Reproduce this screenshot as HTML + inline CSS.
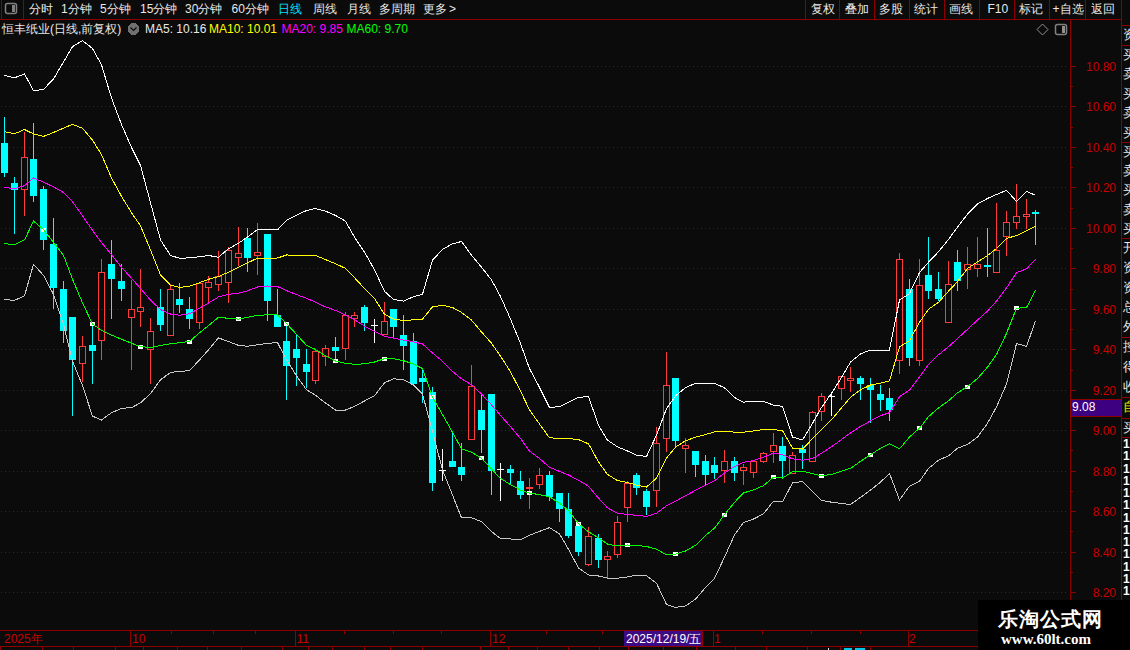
<!DOCTYPE html>
<html><head><meta charset="utf-8">
<style>
*{margin:0;padding:0;box-sizing:border-box}
html,body{width:1130px;height:650px;overflow:hidden;background:#0b0b0b;font-family:"Liberation Sans",sans-serif;}
.a{position:absolute;white-space:nowrap;line-height:16px;font-size:12px;color:#e8e8e8}
.pl{position:absolute;right:14px;width:50px;text-align:right;font-size:12px;line-height:16px;color:#c80000}
svg{position:absolute;left:0;top:0}
.wm1{position:absolute;left:998px;top:607px;font-size:20px;line-height:24px;font-weight:bold;color:#fff;font-family:"Liberation Serif",serif;letter-spacing:1px}
.wm2{position:absolute;left:1001px;top:630px;font-size:15px;line-height:18px;font-weight:bold;color:#fff;font-family:"Liberation Serif",serif}
.rpc{position:absolute;left:1123px;font-size:13px;line-height:16px;color:#e8e8e8}
.rpn{position:absolute;left:1123px;font-size:12px;line-height:12px;color:#ffffff;font-weight:bold}
</style></head><body>
<svg width="1130" height="650" shape-rendering="crispEdges">
<rect x="0" y="19" width="1121" height="1" fill="#8c0000"/>
<line x1="1" y1="66.5" x2="1068" y2="66.5" stroke="#8c0000" stroke-width="1" stroke-dasharray="1 3"/>
<line x1="1" y1="106.5" x2="1068" y2="106.5" stroke="#8c0000" stroke-width="1" stroke-dasharray="1 3"/>
<line x1="1" y1="147.5" x2="1068" y2="147.5" stroke="#8c0000" stroke-width="1" stroke-dasharray="1 3"/>
<line x1="1" y1="187.5" x2="1068" y2="187.5" stroke="#8c0000" stroke-width="1" stroke-dasharray="1 3"/>
<line x1="1" y1="228.5" x2="1068" y2="228.5" stroke="#8c0000" stroke-width="1" stroke-dasharray="1 3"/>
<line x1="1" y1="268.5" x2="1068" y2="268.5" stroke="#8c0000" stroke-width="1" stroke-dasharray="1 3"/>
<line x1="1" y1="309.5" x2="1068" y2="309.5" stroke="#8c0000" stroke-width="1" stroke-dasharray="1 3"/>
<line x1="1" y1="349.5" x2="1068" y2="349.5" stroke="#8c0000" stroke-width="1" stroke-dasharray="1 3"/>
<line x1="1" y1="390.5" x2="1068" y2="390.5" stroke="#8c0000" stroke-width="1" stroke-dasharray="1 3"/>
<line x1="1" y1="430.5" x2="1068" y2="430.5" stroke="#8c0000" stroke-width="1" stroke-dasharray="1 3"/>
<line x1="1" y1="471.5" x2="1068" y2="471.5" stroke="#8c0000" stroke-width="1" stroke-dasharray="1 3"/>
<line x1="1" y1="511.5" x2="1068" y2="511.5" stroke="#8c0000" stroke-width="1" stroke-dasharray="1 3"/>
<line x1="1" y1="552.5" x2="1068" y2="552.5" stroke="#8c0000" stroke-width="1" stroke-dasharray="1 3"/>
<line x1="1" y1="592.5" x2="1068" y2="592.5" stroke="#8c0000" stroke-width="1" stroke-dasharray="1 3"/>
<rect x="4" y="117" width="1" height="60" fill="#00ffff"/>
<rect x="1" y="143" width="7" height="30" fill="#00ffff"/>
<rect x="14" y="177" width="1" height="57" fill="#00ffff"/>
<rect x="11" y="183" width="7" height="7" fill="#00ffff"/>
<rect x="24" y="132" width="1" height="25" fill="#ff3c3c"/>
<rect x="24" y="189" width="1" height="27" fill="#ff3c3c"/>
<rect x="21.5" y="157.5" width="6" height="32" fill="none" stroke="#ff3c3c" stroke-width="1"/>
<rect x="33" y="123" width="1" height="79" fill="#00ffff"/>
<rect x="30" y="159" width="7" height="37" fill="#00ffff"/>
<rect x="43" y="186" width="1" height="64" fill="#00ffff"/>
<rect x="40" y="189" width="7" height="51" fill="#00ffff"/>
<rect x="53" y="218" width="1" height="91" fill="#00ffff"/>
<rect x="50" y="244" width="7" height="44" fill="#00ffff"/>
<rect x="63" y="281" width="1" height="62" fill="#00ffff"/>
<rect x="60" y="289" width="7" height="42" fill="#00ffff"/>
<rect x="72" y="317" width="1" height="99" fill="#00ffff"/>
<rect x="69" y="317" width="7" height="43" fill="#00ffff"/>
<rect x="82" y="336" width="1" height="10" fill="#ff3c3c"/>
<rect x="82" y="363" width="1" height="19" fill="#ff3c3c"/>
<rect x="79.5" y="346.5" width="6" height="17" fill="none" stroke="#ff3c3c" stroke-width="1"/>
<rect x="92" y="324" width="1" height="60" fill="#00ffff"/>
<rect x="89" y="345" width="7" height="6" fill="#00ffff"/>
<rect x="101" y="259" width="1" height="13" fill="#ff3c3c"/>
<rect x="101" y="340" width="1" height="20" fill="#ff3c3c"/>
<rect x="98.5" y="272.5" width="6" height="68" fill="none" stroke="#ff3c3c" stroke-width="1"/>
<rect x="111" y="240" width="1" height="79" fill="#00ffff"/>
<rect x="108" y="264" width="7" height="15" fill="#00ffff"/>
<rect x="121" y="264" width="1" height="37" fill="#00ffff"/>
<rect x="118" y="281" width="7" height="8" fill="#00ffff"/>
<rect x="131" y="280" width="1" height="29" fill="#ff3c3c"/>
<rect x="131" y="317" width="1" height="53" fill="#ff3c3c"/>
<rect x="128.5" y="309.5" width="6" height="8" fill="none" stroke="#ff3c3c" stroke-width="1"/>
<rect x="140" y="269" width="1" height="38" fill="#ff3c3c"/>
<rect x="140" y="311" width="1" height="16" fill="#ff3c3c"/>
<rect x="137.5" y="307.5" width="6" height="4" fill="none" stroke="#ff3c3c" stroke-width="1"/>
<rect x="150" y="318" width="1" height="13" fill="#ff3c3c"/>
<rect x="150" y="349" width="1" height="35" fill="#ff3c3c"/>
<rect x="147.5" y="331.5" width="6" height="18" fill="none" stroke="#ff3c3c" stroke-width="1"/>
<rect x="160" y="289" width="1" height="42" fill="#00ffff"/>
<rect x="157" y="307" width="7" height="18" fill="#00ffff"/>
<rect x="170" y="284" width="1" height="5" fill="#ff3c3c"/>
<rect x="170" y="335" width="1" height="1" fill="#ff3c3c"/>
<rect x="167.5" y="289.5" width="6" height="46" fill="none" stroke="#ff3c3c" stroke-width="1"/>
<rect x="179" y="283" width="1" height="30" fill="#00ffff"/>
<rect x="176" y="299" width="7" height="6" fill="#00ffff"/>
<rect x="189" y="297" width="1" height="32" fill="#00ffff"/>
<rect x="186" y="309" width="7" height="10" fill="#00ffff"/>
<rect x="199" y="283" width="1" height="0" fill="#ff3c3c"/>
<rect x="199" y="322" width="1" height="7" fill="#ff3c3c"/>
<rect x="196.5" y="283.5" width="6" height="39" fill="none" stroke="#ff3c3c" stroke-width="1"/>
<rect x="208" y="276" width="1" height="6" fill="#ff3c3c"/>
<rect x="208" y="287" width="1" height="16" fill="#ff3c3c"/>
<rect x="205.5" y="282.5" width="6" height="5" fill="none" stroke="#ff3c3c" stroke-width="1"/>
<rect x="218" y="251" width="1" height="25" fill="#ff3c3c"/>
<rect x="218" y="284" width="1" height="7" fill="#ff3c3c"/>
<rect x="215.5" y="276.5" width="6" height="8" fill="none" stroke="#ff3c3c" stroke-width="1"/>
<rect x="228" y="247" width="1" height="3" fill="#ff3c3c"/>
<rect x="228" y="282" width="1" height="21" fill="#ff3c3c"/>
<rect x="225.5" y="250.5" width="6" height="32" fill="none" stroke="#ff3c3c" stroke-width="1"/>
<rect x="238" y="227" width="1" height="26" fill="#ff3c3c"/>
<rect x="238" y="257" width="1" height="9" fill="#ff3c3c"/>
<rect x="235.5" y="253.5" width="6" height="4" fill="none" stroke="#ff3c3c" stroke-width="1"/>
<rect x="247" y="228" width="1" height="44" fill="#00ffff"/>
<rect x="244" y="238" width="7" height="20" fill="#00ffff"/>
<rect x="257" y="223" width="1" height="29" fill="#ff3c3c"/>
<rect x="257" y="255" width="1" height="20" fill="#ff3c3c"/>
<rect x="254.5" y="252.5" width="6" height="3" fill="none" stroke="#ff3c3c" stroke-width="1"/>
<rect x="267" y="234" width="1" height="87" fill="#00ffff"/>
<rect x="264" y="234" width="7" height="67" fill="#00ffff"/>
<rect x="277" y="289" width="1" height="38" fill="#00ffff"/>
<rect x="274" y="315" width="7" height="12" fill="#00ffff"/>
<rect x="286" y="323" width="1" height="77" fill="#00ffff"/>
<rect x="283" y="341" width="7" height="25" fill="#00ffff"/>
<rect x="296" y="335" width="1" height="51" fill="#00ffff"/>
<rect x="293" y="349" width="7" height="9" fill="#00ffff"/>
<rect x="306" y="349" width="1" height="39" fill="#00ffff"/>
<rect x="303" y="364" width="7" height="8" fill="#00ffff"/>
<rect x="315" y="349" width="1" height="2" fill="#ff3c3c"/>
<rect x="315" y="380" width="1" height="4" fill="#ff3c3c"/>
<rect x="312.5" y="351.5" width="6" height="29" fill="none" stroke="#ff3c3c" stroke-width="1"/>
<rect x="325" y="345" width="1" height="3" fill="#ff3c3c"/>
<rect x="325" y="356" width="1" height="10" fill="#ff3c3c"/>
<rect x="322.5" y="348.5" width="6" height="8" fill="none" stroke="#ff3c3c" stroke-width="1"/>
<rect x="335" y="337" width="1" height="23" fill="#00ffff"/>
<rect x="332" y="347" width="7" height="4" fill="#00ffff"/>
<rect x="345" y="312" width="1" height="3" fill="#ff3c3c"/>
<rect x="345" y="348" width="1" height="12" fill="#ff3c3c"/>
<rect x="342.5" y="315.5" width="6" height="33" fill="none" stroke="#ff3c3c" stroke-width="1"/>
<rect x="354" y="312" width="1" height="3" fill="#ff3c3c"/>
<rect x="354" y="318" width="1" height="9" fill="#ff3c3c"/>
<rect x="351.5" y="315.5" width="6" height="3" fill="none" stroke="#ff3c3c" stroke-width="1"/>
<rect x="364" y="305" width="1" height="26" fill="#00ffff"/>
<rect x="361" y="307" width="7" height="16" fill="#00ffff"/>
<rect x="374" y="319" width="1" height="24" fill="#ffffff"/>
<rect x="371" y="325" width="7" height="1" fill="#ffffff"/>
<rect x="384" y="302" width="1" height="19" fill="#ff3c3c"/>
<rect x="384" y="334" width="1" height="1" fill="#ff3c3c"/>
<rect x="381.5" y="321.5" width="6" height="13" fill="none" stroke="#ff3c3c" stroke-width="1"/>
<rect x="393" y="309" width="1" height="28" fill="#00ffff"/>
<rect x="390" y="309" width="7" height="18" fill="#00ffff"/>
<rect x="403" y="315" width="1" height="55" fill="#00ffff"/>
<rect x="400" y="335" width="7" height="11" fill="#00ffff"/>
<rect x="413" y="333" width="1" height="53" fill="#00ffff"/>
<rect x="410" y="341" width="7" height="43" fill="#00ffff"/>
<rect x="422" y="369" width="1" height="34" fill="#00ffff"/>
<rect x="419" y="378" width="7" height="4" fill="#00ffff"/>
<rect x="432" y="387" width="1" height="104" fill="#00ffff"/>
<rect x="429" y="392" width="7" height="91" fill="#00ffff"/>
<rect x="442" y="449" width="1" height="32" fill="#ffffff"/>
<rect x="439" y="470" width="7" height="1" fill="#ffffff"/>
<rect x="452" y="433" width="1" height="34" fill="#00ffff"/>
<rect x="449" y="461" width="7" height="6" fill="#00ffff"/>
<rect x="461" y="443" width="1" height="38" fill="#00ffff"/>
<rect x="458" y="467" width="7" height="8" fill="#00ffff"/>
<rect x="471" y="365" width="1" height="21" fill="#ff3c3c"/>
<rect x="471" y="439" width="1" height="1" fill="#ff3c3c"/>
<rect x="468.5" y="386.5" width="6" height="53" fill="none" stroke="#ff3c3c" stroke-width="1"/>
<rect x="481" y="395" width="1" height="58" fill="#00ffff"/>
<rect x="478" y="410" width="7" height="20" fill="#00ffff"/>
<rect x="491" y="394" width="1" height="101" fill="#00ffff"/>
<rect x="488" y="394" width="7" height="77" fill="#00ffff"/>
<rect x="500" y="463" width="1" height="38" fill="#ffffff"/>
<rect x="497" y="469" width="7" height="1" fill="#ffffff"/>
<rect x="510" y="465" width="1" height="19" fill="#00ffff"/>
<rect x="507" y="469" width="7" height="4" fill="#00ffff"/>
<rect x="520" y="471" width="1" height="28" fill="#00ffff"/>
<rect x="517" y="481" width="7" height="14" fill="#00ffff"/>
<rect x="529" y="478" width="1" height="9" fill="#ff3c3c"/>
<rect x="529" y="488" width="1" height="21" fill="#ff3c3c"/>
<rect x="526.5" y="487.5" width="6" height="1" fill="none" stroke="#ff3c3c" stroke-width="1"/>
<rect x="539" y="468" width="1" height="7" fill="#ff3c3c"/>
<rect x="539" y="484" width="1" height="5" fill="#ff3c3c"/>
<rect x="536.5" y="475.5" width="6" height="9" fill="none" stroke="#ff3c3c" stroke-width="1"/>
<rect x="549" y="471" width="1" height="30" fill="#00ffff"/>
<rect x="546" y="475" width="7" height="22" fill="#00ffff"/>
<rect x="559" y="493" width="1" height="29" fill="#00ffff"/>
<rect x="556" y="493" width="7" height="16" fill="#00ffff"/>
<rect x="568" y="493" width="1" height="45" fill="#00ffff"/>
<rect x="565" y="509" width="7" height="27" fill="#00ffff"/>
<rect x="578" y="522" width="1" height="34" fill="#00ffff"/>
<rect x="575" y="526" width="7" height="26" fill="#00ffff"/>
<rect x="588" y="527" width="1" height="9" fill="#ff3c3c"/>
<rect x="588" y="564" width="1" height="2" fill="#ff3c3c"/>
<rect x="585.5" y="536.5" width="6" height="28" fill="none" stroke="#ff3c3c" stroke-width="1"/>
<rect x="598" y="534" width="1" height="34" fill="#00ffff"/>
<rect x="595" y="538" width="7" height="22" fill="#00ffff"/>
<rect x="607" y="551" width="1" height="5" fill="#ff3c3c"/>
<rect x="607" y="559" width="1" height="19" fill="#ff3c3c"/>
<rect x="604.5" y="556.5" width="6" height="3" fill="none" stroke="#ff3c3c" stroke-width="1"/>
<rect x="617" y="516" width="1" height="6" fill="#ff3c3c"/>
<rect x="617" y="554" width="1" height="4" fill="#ff3c3c"/>
<rect x="614.5" y="522.5" width="6" height="32" fill="none" stroke="#ff3c3c" stroke-width="1"/>
<rect x="627" y="481" width="1" height="2" fill="#ff3c3c"/>
<rect x="627" y="507" width="1" height="15" fill="#ff3c3c"/>
<rect x="624.5" y="483.5" width="6" height="24" fill="none" stroke="#ff3c3c" stroke-width="1"/>
<rect x="636" y="473" width="1" height="22" fill="#00ffff"/>
<rect x="633" y="475" width="7" height="13" fill="#00ffff"/>
<rect x="646" y="489" width="1" height="26" fill="#00ffff"/>
<rect x="643" y="491" width="7" height="16" fill="#00ffff"/>
<rect x="656" y="427" width="1" height="16" fill="#ff3c3c"/>
<rect x="656" y="490" width="1" height="17" fill="#ff3c3c"/>
<rect x="653.5" y="443.5" width="6" height="47" fill="none" stroke="#ff3c3c" stroke-width="1"/>
<rect x="666" y="352" width="1" height="33" fill="#ff3c3c"/>
<rect x="666" y="438" width="1" height="14" fill="#ff3c3c"/>
<rect x="663.5" y="385.5" width="6" height="53" fill="none" stroke="#ff3c3c" stroke-width="1"/>
<rect x="675" y="378" width="1" height="69" fill="#00ffff"/>
<rect x="672" y="378" width="7" height="63" fill="#00ffff"/>
<rect x="685" y="438" width="1" height="7" fill="#ff3c3c"/>
<rect x="685" y="448" width="1" height="25" fill="#ff3c3c"/>
<rect x="682.5" y="445.5" width="6" height="3" fill="none" stroke="#ff3c3c" stroke-width="1"/>
<rect x="695" y="451" width="1" height="26" fill="#00ffff"/>
<rect x="692" y="451" width="7" height="14" fill="#00ffff"/>
<rect x="705" y="455" width="1" height="31" fill="#00ffff"/>
<rect x="702" y="461" width="7" height="14" fill="#00ffff"/>
<rect x="714" y="457" width="1" height="22" fill="#00ffff"/>
<rect x="711" y="465" width="7" height="8" fill="#00ffff"/>
<rect x="724" y="450" width="1" height="11" fill="#ff3c3c"/>
<rect x="724" y="470" width="1" height="13" fill="#ff3c3c"/>
<rect x="721.5" y="461.5" width="6" height="9" fill="none" stroke="#ff3c3c" stroke-width="1"/>
<rect x="734" y="457" width="1" height="24" fill="#00ffff"/>
<rect x="731" y="461" width="7" height="12" fill="#00ffff"/>
<rect x="743" y="464" width="1" height="3" fill="#ff3c3c"/>
<rect x="743" y="470" width="1" height="15" fill="#ff3c3c"/>
<rect x="740.5" y="467.5" width="6" height="3" fill="none" stroke="#ff3c3c" stroke-width="1"/>
<rect x="753" y="461" width="1" height="0" fill="#ff3c3c"/>
<rect x="753" y="472" width="1" height="6" fill="#ff3c3c"/>
<rect x="750.5" y="461.5" width="6" height="11" fill="none" stroke="#ff3c3c" stroke-width="1"/>
<rect x="763" y="452" width="1" height="1" fill="#ff3c3c"/>
<rect x="763" y="461" width="1" height="2" fill="#ff3c3c"/>
<rect x="760.5" y="453.5" width="6" height="8" fill="none" stroke="#ff3c3c" stroke-width="1"/>
<rect x="773" y="433" width="1" height="12" fill="#ff3c3c"/>
<rect x="773" y="451" width="1" height="12" fill="#ff3c3c"/>
<rect x="770.5" y="445.5" width="6" height="6" fill="none" stroke="#ff3c3c" stroke-width="1"/>
<rect x="782" y="437" width="1" height="40" fill="#00ffff"/>
<rect x="779" y="446" width="7" height="15" fill="#00ffff"/>
<rect x="792" y="452" width="1" height="3" fill="#ff3c3c"/>
<rect x="792" y="473" width="1" height="1" fill="#ff3c3c"/>
<rect x="789.5" y="455.5" width="6" height="18" fill="none" stroke="#ff3c3c" stroke-width="1"/>
<rect x="802" y="445" width="1" height="24" fill="#00ffff"/>
<rect x="799" y="449" width="7" height="4" fill="#00ffff"/>
<rect x="812" y="411" width="1" height="1" fill="#ff3c3c"/>
<rect x="812" y="461" width="1" height="1" fill="#ff3c3c"/>
<rect x="809.5" y="412.5" width="6" height="49" fill="none" stroke="#ff3c3c" stroke-width="1"/>
<rect x="821" y="393" width="1" height="3" fill="#ff3c3c"/>
<rect x="821" y="411" width="1" height="10" fill="#ff3c3c"/>
<rect x="818.5" y="396.5" width="6" height="15" fill="none" stroke="#ff3c3c" stroke-width="1"/>
<rect x="831" y="394" width="1" height="22" fill="#ffffff"/>
<rect x="828" y="396" width="7" height="1" fill="#ffffff"/>
<rect x="841" y="376" width="1" height="0" fill="#ff3c3c"/>
<rect x="841" y="388" width="1" height="12" fill="#ff3c3c"/>
<rect x="838.5" y="376.5" width="6" height="12" fill="none" stroke="#ff3c3c" stroke-width="1"/>
<rect x="850" y="367" width="1" height="11" fill="#ff3c3c"/>
<rect x="850" y="380" width="1" height="12" fill="#ff3c3c"/>
<rect x="847.5" y="378.5" width="6" height="2" fill="none" stroke="#ff3c3c" stroke-width="1"/>
<rect x="860" y="376" width="1" height="24" fill="#00ffff"/>
<rect x="857" y="378" width="7" height="6" fill="#00ffff"/>
<rect x="870" y="378" width="1" height="45" fill="#00ffff"/>
<rect x="867" y="385" width="7" height="5" fill="#00ffff"/>
<rect x="880" y="385" width="1" height="26" fill="#00ffff"/>
<rect x="877" y="394" width="7" height="6" fill="#00ffff"/>
<rect x="889" y="388" width="1" height="33" fill="#00ffff"/>
<rect x="886" y="398" width="7" height="12" fill="#00ffff"/>
<rect x="899" y="253" width="1" height="6" fill="#ff3c3c"/>
<rect x="899" y="360" width="1" height="14" fill="#ff3c3c"/>
<rect x="896.5" y="259.5" width="6" height="101" fill="none" stroke="#ff3c3c" stroke-width="1"/>
<rect x="909" y="279" width="1" height="87" fill="#00ffff"/>
<rect x="906" y="289" width="7" height="69" fill="#00ffff"/>
<rect x="919" y="259" width="1" height="26" fill="#ff3c3c"/>
<rect x="919" y="360" width="1" height="6" fill="#ff3c3c"/>
<rect x="916.5" y="285.5" width="6" height="75" fill="none" stroke="#ff3c3c" stroke-width="1"/>
<rect x="928" y="237" width="1" height="62" fill="#00ffff"/>
<rect x="925" y="275" width="7" height="16" fill="#00ffff"/>
<rect x="938" y="272" width="1" height="29" fill="#00ffff"/>
<rect x="935" y="289" width="7" height="10" fill="#00ffff"/>
<rect x="948" y="261" width="1" height="23" fill="#ff3c3c"/>
<rect x="948" y="322" width="1" height="1" fill="#ff3c3c"/>
<rect x="945.5" y="284.5" width="6" height="38" fill="none" stroke="#ff3c3c" stroke-width="1"/>
<rect x="957" y="250" width="1" height="41" fill="#00ffff"/>
<rect x="954" y="262" width="7" height="19" fill="#00ffff"/>
<rect x="967" y="247" width="1" height="17" fill="#ff3c3c"/>
<rect x="967" y="269" width="1" height="20" fill="#ff3c3c"/>
<rect x="964.5" y="264.5" width="6" height="5" fill="none" stroke="#ff3c3c" stroke-width="1"/>
<rect x="977" y="237" width="1" height="27" fill="#ff3c3c"/>
<rect x="977" y="268" width="1" height="9" fill="#ff3c3c"/>
<rect x="974.5" y="264.5" width="6" height="4" fill="none" stroke="#ff3c3c" stroke-width="1"/>
<rect x="987" y="228" width="1" height="49" fill="#00ffff"/>
<rect x="984" y="265" width="7" height="2" fill="#00ffff"/>
<rect x="996" y="203" width="1" height="47" fill="#ff3c3c"/>
<rect x="996" y="272" width="1" height="1" fill="#ff3c3c"/>
<rect x="993.5" y="250.5" width="6" height="22" fill="none" stroke="#ff3c3c" stroke-width="1"/>
<rect x="1006" y="211" width="1" height="11" fill="#ff3c3c"/>
<rect x="1006" y="236" width="1" height="20" fill="#ff3c3c"/>
<rect x="1003.5" y="222.5" width="6" height="14" fill="none" stroke="#ff3c3c" stroke-width="1"/>
<rect x="1016" y="184" width="1" height="32" fill="#ff3c3c"/>
<rect x="1016" y="222" width="1" height="7" fill="#ff3c3c"/>
<rect x="1013.5" y="216.5" width="6" height="6" fill="none" stroke="#ff3c3c" stroke-width="1"/>
<rect x="1026" y="199" width="1" height="15" fill="#ff3c3c"/>
<rect x="1026" y="216" width="1" height="13" fill="#ff3c3c"/>
<rect x="1023.5" y="214.5" width="6" height="2" fill="none" stroke="#ff3c3c" stroke-width="1"/>
<rect x="1035" y="210" width="1" height="35" fill="#00ffff"/>
<rect x="1032" y="212" width="7" height="2" fill="#00ffff"/>
<rect x="41" y="228" width="5" height="4" fill="#ffffff"/>
<rect x="90" y="322" width="5" height="4" fill="#ffffff"/>
<rect x="138" y="345" width="5" height="4" fill="#ffffff"/>
<rect x="187" y="340" width="5" height="4" fill="#ffffff"/>
<rect x="236" y="317" width="5" height="4" fill="#ffffff"/>
<rect x="284" y="322" width="5" height="4" fill="#ffffff"/>
<rect x="333" y="359" width="5" height="4" fill="#ffffff"/>
<rect x="382" y="357" width="5" height="4" fill="#ffffff"/>
<rect x="430" y="395" width="5" height="4" fill="#ffffff"/>
<rect x="479" y="456" width="5" height="4" fill="#ffffff"/>
<rect x="527" y="491" width="5" height="4" fill="#ffffff"/>
<rect x="576" y="522" width="5" height="4" fill="#ffffff"/>
<rect x="625" y="543" width="5" height="4" fill="#ffffff"/>
<rect x="673" y="552" width="5" height="4" fill="#ffffff"/>
<rect x="722" y="513" width="5" height="4" fill="#ffffff"/>
<rect x="771" y="475" width="5" height="4" fill="#ffffff"/>
<rect x="819" y="474" width="5" height="4" fill="#ffffff"/>
<rect x="868" y="453" width="5" height="4" fill="#ffffff"/>
<rect x="917" y="426" width="5" height="4" fill="#ffffff"/>
<rect x="965" y="385" width="5" height="4" fill="#ffffff"/>
<rect x="1014" y="306" width="5" height="4" fill="#ffffff"/>
<polyline points="4.5,75.3 14.5,77.8 24.5,73.9 33.5,90.7 43.5,89.4 53.5,79.0 63.5,62.0 72.5,46.7 82.5,40.6 92.5,48.5 101.5,64.8 111.5,98.0 121.5,124.5 131.5,147.4 140.5,165.5 150.5,202.7 160.5,239.9 170.5,255.5 179.5,258.2 189.5,257.9 199.5,256.7 208.5,255.5 218.5,257.2 228.5,248.8 238.5,243.2 247.5,237.0 257.5,229.6 267.5,229.2 277.5,229.9 286.5,220.2 296.5,215.2 306.5,210.5 315.5,208.5 325.5,211.2 335.5,215.4 345.5,221.2 354.5,237.1 364.5,252.1 374.5,269.8 384.5,291.3 393.5,299.5 403.5,301.1 413.5,296.7 422.5,294.3 432.5,260.2 442.5,249.4 452.5,243.8 461.5,241.5 471.5,255.1 481.5,267.2 491.5,279.9 500.5,296.5 510.5,319.0 520.5,343.5 529.5,368.6 539.5,387.4 549.5,407.4 559.5,406.7 568.5,402.2 578.5,397.4 588.5,396.6 598.5,425.2 607.5,440.2 617.5,446.9 627.5,451.0 636.5,455.2 646.5,456.5 656.5,435.1 666.5,408.5 675.5,396.0 685.5,387.5 695.5,383.4 705.5,383.4 714.5,383.4 724.5,387.8 734.5,397.5 743.5,402.2 753.5,401.1 763.5,401.3 773.5,405.2 782.5,406.3 792.5,437.0 802.5,439.9 812.5,423.3 821.5,407.5 831.5,393.4 841.5,377.5 850.5,362.1 860.5,353.9 870.5,350.0 880.5,350.0 889.5,350.0 899.5,300.1 909.5,293.5 919.5,272.5 928.5,262.2 938.5,251.7 948.5,239.4 957.5,227.2 967.5,214.1 977.5,204.0 987.5,198.5 996.5,194.5 1006.5,190.3 1016.5,201.4 1026.5,191.2 1035.5,195.4" fill="none" stroke="#ffffff" stroke-width="1"/>
<polyline points="4.5,131.6 14.5,133.8 24.5,129.5 33.5,133.9 43.5,136.4 53.5,132.5 63.5,128.1 72.5,124.3 82.5,128.3 92.5,140.1 101.5,154.6 111.5,178.0 121.5,196.3 131.5,212.7 140.5,225.8 150.5,249.8 160.5,275.0 170.5,285.2 179.5,287.5 189.5,286.1 199.5,282.7 208.5,279.3 218.5,276.5 228.5,272.2 238.5,267.3 247.5,262.8 257.5,258.2 267.5,258.7 277.5,258.0 286.5,255.0 296.5,255.1 306.5,255.3 315.5,255.4 325.5,259.6 335.5,263.7 345.5,268.4 354.5,277.7 364.5,288.5 374.5,298.4 384.5,314.4 393.5,319.0 403.5,320.5 413.5,319.8 422.5,319.2 432.5,306.8 442.5,305.3 452.5,307.5 461.5,312.4 471.5,320.1 481.5,331.9 491.5,343.2 500.5,356.1 510.5,371.8 520.5,391.1 529.5,409.9 539.5,424.0 549.5,437.8 559.5,438.4 568.5,438.6 578.5,439.6 588.5,443.8 598.5,461.9 607.5,474.4 617.5,480.6 627.5,482.5 636.5,485.1 646.5,487.0 656.5,478.2 666.5,458.1 675.5,447.2 685.5,440.8 695.5,437.2 705.5,434.6 714.5,431.8 724.5,431.2 734.5,432.1 743.5,432.2 753.5,430.9 763.5,429.5 773.5,429.6 782.5,430.6 792.5,448.0 802.5,449.1 812.5,438.7 821.5,429.8 831.5,419.7 841.5,407.9 850.5,397.3 860.5,389.9 870.5,385.0 880.5,383.1 889.5,380.8 899.5,347.0 909.5,340.6 919.5,322.3 928.5,309.3 938.5,302.3 948.5,291.2 957.5,281.6 967.5,268.5 977.5,261.9 987.5,255.6 996.5,248.5 1006.5,238.4 1016.5,235.6 1026.5,230.6 1035.5,226.2" fill="none" stroke="#ffff00" stroke-width="1"/>
<polyline points="4.5,187.4 14.5,188.8 24.5,185.7 33.5,178.0 43.5,182.1 53.5,186.9 63.5,192.5 72.5,201.8 82.5,215.8 92.5,230.3 101.5,242.6 111.5,254.6 121.5,267.3 131.5,278.3 140.5,288.4 150.5,300.1 160.5,309.6 170.5,314.0 179.5,315.2 189.5,313.8 199.5,308.2 208.5,303.0 218.5,296.9 228.5,294.3 238.5,293.1 247.5,290.8 257.5,287.0 267.5,286.0 277.5,286.6 286.5,290.6 296.5,294.6 306.5,298.2 315.5,302.3 325.5,306.9 335.5,310.4 345.5,315.0 354.5,319.7 364.5,326.1 374.5,331.3 384.5,336.3 393.5,338.0 403.5,340.2 413.5,341.8 422.5,344.0 432.5,353.0 442.5,361.3 452.5,371.5 461.5,378.8 471.5,384.9 481.5,394.0 491.5,404.8 500.5,415.4 510.5,426.6 520.5,438.5 529.5,451.1 539.5,458.4 549.5,467.3 559.5,471.4 568.5,475.0 578.5,480.2 588.5,486.3 598.5,498.1 607.5,507.9 617.5,513.2 627.5,514.5 636.5,515.4 646.5,516.4 656.5,513.3 666.5,505.7 675.5,501.3 685.5,495.7 695.5,490.4 705.5,485.3 714.5,480.8 724.5,472.9 734.5,466.7 743.5,462.3 753.5,460.5 763.5,457.3 773.5,453.1 782.5,454.7 792.5,458.8 802.5,460.2 812.5,458.5 821.5,453.2 831.5,446.7 841.5,439.6 850.5,432.9 860.5,426.4 870.5,420.9 880.5,415.7 889.5,412.7 899.5,396.7 909.5,390.0 919.5,377.0 928.5,364.5 938.5,354.8 948.5,346.7 957.5,338.6 967.5,329.3 977.5,320.1 987.5,311.0 996.5,301.1 1006.5,288.0 1016.5,272.7 1026.5,268.9 1035.5,259.5" fill="none" stroke="#ff00ff" stroke-width="1"/>
<polyline points="4.5,243.5 14.5,244.9 24.5,239.9 33.5,221.0 43.5,229.6 53.5,242.4 63.5,255.3 72.5,279.3 82.5,302.9 92.5,324.1 101.5,330.3 111.5,335.1 121.5,339.2 131.5,343.2 140.5,346.7 150.5,347.4 160.5,345.5 170.5,343.8 179.5,342.7 189.5,341.5 199.5,332.8 208.5,325.6 218.5,317.3 228.5,318.3 238.5,319.1 247.5,317.3 257.5,315.4 267.5,314.8 277.5,314.9 286.5,323.5 296.5,334.4 306.5,345.4 315.5,349.5 325.5,355.8 335.5,361.0 345.5,363.4 354.5,364.2 364.5,363.9 374.5,362.0 384.5,358.7 393.5,358.7 403.5,360.7 413.5,364.0 422.5,368.5 432.5,397.2 442.5,414.5 452.5,432.3 461.5,448.8 471.5,452.1 481.5,458.3 491.5,469.0 500.5,478.4 510.5,484.6 520.5,490.1 529.5,493.1 539.5,494.6 549.5,496.8 559.5,503.2 568.5,510.5 578.5,523.6 588.5,531.8 598.5,537.7 607.5,544.1 617.5,546.0 627.5,545.0 636.5,545.5 646.5,546.5 656.5,549.1 666.5,554.8 675.5,554.2 685.5,551.0 695.5,545.3 705.5,535.5 714.5,528.2 724.5,514.6 734.5,502.3 743.5,492.9 753.5,489.9 763.5,485.7 773.5,477.1 782.5,478.1 792.5,471.7 802.5,471.3 812.5,473.6 821.5,475.8 831.5,474.4 841.5,471.1 850.5,468.3 860.5,461.4 870.5,454.6 880.5,448.4 889.5,443.6 899.5,448.9 909.5,437.0 919.5,428.2 928.5,416.7 938.5,407.9 948.5,400.8 957.5,392.8 967.5,386.6 977.5,378.5 987.5,367.1 996.5,354.5 1006.5,333.4 1016.5,308.2 1026.5,307.6 1035.5,290.3" fill="none" stroke="#00ff00" stroke-width="1"/>
<polyline points="4.5,299.5 14.5,300.4 24.5,295.8 33.5,264.3 43.5,275.4 53.5,294.4 63.5,324.3 72.5,361.2 82.5,385.6 92.5,416.2 101.5,420.0 111.5,412.7 121.5,408.4 131.5,407.6 140.5,402.9 150.5,393.6 160.5,379.9 170.5,372.4 179.5,371.5 189.5,370.6 199.5,360.0 208.5,349.8 218.5,337.9 228.5,341.5 238.5,345.4 247.5,346.3 257.5,344.8 267.5,343.4 277.5,342.6 286.5,359.7 296.5,375.9 306.5,389.7 315.5,395.3 325.5,403.0 335.5,410.0 345.5,410.0 354.5,406.4 364.5,401.0 374.5,395.7 384.5,382.8 393.5,378.7 403.5,379.8 413.5,385.0 422.5,394.1 432.5,431.3 442.5,470.0 452.5,495.1 461.5,517.8 471.5,517.7 481.5,521.7 491.5,531.5 500.5,538.6 510.5,539.0 520.5,539.6 529.5,535.2 539.5,531.4 549.5,527.6 559.5,534.0 568.5,549.2 578.5,567.9 588.5,575.0 598.5,576.0 607.5,578.2 617.5,578.2 627.5,576.9 636.5,575.1 646.5,575.7 656.5,583.2 666.5,604.5 675.5,607.4 685.5,606.0 695.5,599.1 705.5,587.6 714.5,578.3 724.5,557.2 734.5,535.0 743.5,522.5 753.5,519.0 763.5,513.9 773.5,501.1 782.5,502.0 792.5,482.8 802.5,481.5 812.5,491.4 821.5,500.3 831.5,502.2 841.5,503.5 850.5,504.5 860.5,497.4 870.5,490.1 880.5,482.1 889.5,473.5 899.5,499.9 909.5,486.1 919.5,481.3 928.5,468.5 938.5,460.2 948.5,455.9 957.5,448.2 967.5,444.4 977.5,437.1 987.5,423.3 996.5,406.9 1006.5,384.2 1016.5,343.6 1026.5,346.3 1035.5,321.0" fill="none" stroke="#c8c8c8" stroke-width="1"/>
<rect x="1070" y="20" width="1" height="610" fill="#8c0000"/>
<rect x="1121" y="0" width="1" height="600" fill="#8c0000"/>
<rect x="1070" y="66" width="6" height="1" fill="#8c0000"/>
<rect x="1070" y="86" width="3" height="1" fill="#8c0000"/>
<rect x="1070" y="106" width="6" height="1" fill="#8c0000"/>
<rect x="1070" y="127" width="3" height="1" fill="#8c0000"/>
<rect x="1070" y="147" width="6" height="1" fill="#8c0000"/>
<rect x="1070" y="167" width="3" height="1" fill="#8c0000"/>
<rect x="1070" y="187" width="6" height="1" fill="#8c0000"/>
<rect x="1070" y="208" width="3" height="1" fill="#8c0000"/>
<rect x="1070" y="228" width="6" height="1" fill="#8c0000"/>
<rect x="1070" y="248" width="3" height="1" fill="#8c0000"/>
<rect x="1070" y="268" width="6" height="1" fill="#8c0000"/>
<rect x="1070" y="289" width="3" height="1" fill="#8c0000"/>
<rect x="1070" y="309" width="6" height="1" fill="#8c0000"/>
<rect x="1070" y="329" width="3" height="1" fill="#8c0000"/>
<rect x="1070" y="349" width="6" height="1" fill="#8c0000"/>
<rect x="1070" y="370" width="3" height="1" fill="#8c0000"/>
<rect x="1070" y="390" width="6" height="1" fill="#8c0000"/>
<rect x="1070" y="410" width="3" height="1" fill="#8c0000"/>
<rect x="1070" y="430" width="6" height="1" fill="#8c0000"/>
<rect x="1070" y="450" width="3" height="1" fill="#8c0000"/>
<rect x="1070" y="471" width="6" height="1" fill="#8c0000"/>
<rect x="1070" y="491" width="3" height="1" fill="#8c0000"/>
<rect x="1070" y="511" width="6" height="1" fill="#8c0000"/>
<rect x="1070" y="531" width="3" height="1" fill="#8c0000"/>
<rect x="1070" y="552" width="6" height="1" fill="#8c0000"/>
<rect x="1070" y="572" width="3" height="1" fill="#8c0000"/>
<rect x="1070" y="592" width="6" height="1" fill="#8c0000"/>
<rect x="1" y="0" width="1" height="19" fill="#8c0000"/>
<rect x="23" y="0" width="1" height="19" fill="#8c0000"/>
<rect x="805" y="0" width="1" height="19" fill="#8c0000"/>
<rect x="839" y="0" width="1" height="19" fill="#8c0000"/>
<rect x="874" y="0" width="1" height="19" fill="#8c0000"/>
<rect x="909" y="0" width="1" height="19" fill="#8c0000"/>
<rect x="944" y="0" width="1" height="19" fill="#8c0000"/>
<rect x="979" y="0" width="1" height="19" fill="#8c0000"/>
<rect x="1014" y="0" width="1" height="19" fill="#8c0000"/>
<rect x="1049" y="0" width="1" height="19" fill="#8c0000"/>
<rect x="1085" y="0" width="1" height="19" fill="#8c0000"/>
<rect x="5.5" y="3.5" width="11" height="10" rx="2" fill="none" stroke="#808080" stroke-width="1.5" shape-rendering="auto"/>
<rect x="12" y="5" width="3" height="7" fill="#808080"/>
<circle cx="133.5" cy="29" r="6" fill="#707070"/>
<polyline points="130.5,27.5 133.5,30.5 136.5,27.5" fill="none" stroke="#0b0b0b" stroke-width="1.2" shape-rendering="auto"/>
<polygon points="1042.5,24 1048,29.5 1042.5,35 1037,29.5" fill="none" stroke="#909090" stroke-width="1" shape-rendering="auto"/>
<rect x="1055.5" y="24.5" width="11" height="10" rx="2" fill="none" stroke="#808080" stroke-width="1.5" shape-rendering="auto"/>
<rect x="1062" y="26" width="3" height="7" fill="#909090"/>
<rect x="0" y="630" width="1121" height="1" fill="#8c0000"/>
<rect x="0" y="646" width="1121" height="1" fill="#8c0000"/>
<rect x="130" y="630" width="1" height="16" fill="#8c0000"/>
<rect x="295" y="630" width="1" height="16" fill="#8c0000"/>
<rect x="490" y="630" width="1" height="16" fill="#8c0000"/>
<rect x="702" y="630" width="1" height="16" fill="#8c0000"/>
<rect x="713" y="630" width="1" height="16" fill="#8c0000"/>
<rect x="908" y="630" width="1" height="16" fill="#8c0000"/>
<rect x="171" y="631" width="1" height="3" fill="#8c0000"/>
<rect x="213" y="631" width="1" height="3" fill="#8c0000"/>
<rect x="255" y="631" width="1" height="3" fill="#8c0000"/>
<rect x="344" y="631" width="1" height="3" fill="#8c0000"/>
<rect x="393" y="631" width="1" height="3" fill="#8c0000"/>
<rect x="441" y="631" width="1" height="3" fill="#8c0000"/>
<rect x="546" y="631" width="1" height="3" fill="#8c0000"/>
<rect x="602" y="631" width="1" height="3" fill="#8c0000"/>
<rect x="762" y="631" width="1" height="3" fill="#8c0000"/>
<rect x="811" y="631" width="1" height="3" fill="#8c0000"/>
<rect x="860" y="631" width="1" height="3" fill="#8c0000"/>
<rect x="624" y="631" width="78" height="15" fill="#3c0a82"/>
<rect x="0" y="647" width="1" height="3" fill="#8c0000"/>
<rect x="42" y="647" width="1" height="3" fill="#8c0000"/>
<rect x="73" y="647" width="1" height="3" fill="#8c0000"/>
<rect x="115" y="647" width="1" height="3" fill="#8c0000"/>
<rect x="143" y="647" width="1" height="3" fill="#8c0000"/>
<rect x="177" y="647" width="1" height="3" fill="#8c0000"/>
<rect x="207" y="647" width="1" height="3" fill="#8c0000"/>
<rect x="241" y="647" width="1" height="3" fill="#8c0000"/>
<rect x="282" y="647" width="1" height="3" fill="#8c0000"/>
<rect x="308" y="647" width="1" height="3" fill="#8c0000"/>
<rect x="332" y="647" width="1" height="3" fill="#8c0000"/>
<rect x="364" y="647" width="1" height="3" fill="#8c0000"/>
<rect x="390" y="647" width="1" height="3" fill="#8c0000"/>
<rect x="422" y="647" width="1" height="3" fill="#8c0000"/>
<rect x="480" y="647" width="1" height="3" fill="#8c0000"/>
<rect x="508" y="647" width="1" height="3" fill="#8c0000"/>
<rect x="537" y="647" width="1" height="3" fill="#8c0000"/>
<rect x="568" y="647" width="1" height="3" fill="#8c0000"/>
<rect x="599" y="647" width="1" height="3" fill="#8c0000"/>
<rect x="628" y="647" width="1" height="3" fill="#8c0000"/>
<rect x="663" y="647" width="1" height="3" fill="#8c0000"/>
<rect x="696" y="647" width="1" height="3" fill="#8c0000"/>
<rect x="735" y="647" width="1" height="3" fill="#8c0000"/>
<rect x="766" y="647" width="1" height="3" fill="#8c0000"/>
<rect x="807" y="647" width="1" height="3" fill="#8c0000"/>
<rect x="840" y="647" width="1" height="3" fill="#8c0000"/>
<rect x="870" y="647" width="1" height="3" fill="#8c0000"/>
<rect x="828" y="648" width="1" height="2" fill="#e0e0e0"/>
<rect x="844" y="648" width="8" height="2" fill="#00c8e8"/>
<rect x="855" y="648" width="10" height="2" fill="#00c8e8"/>
<rect x="1070" y="399" width="51" height="17" fill="#3c0080" stroke="#8c0000" stroke-width="1"/>
<rect x="1122" y="25" width="8" height="1" fill="#8c0000"/>
<rect x="1122" y="45" width="8" height="1" fill="#8c0000"/>
<rect x="1122" y="142" width="8" height="1" fill="#8c0000"/>
<rect x="1122" y="238" width="8" height="1" fill="#8c0000"/>
<rect x="1122" y="337" width="8" height="1" fill="#8c0000"/>
<rect x="1122" y="397" width="8" height="1" fill="#8c0000"/>
<rect x="1122" y="418" width="8" height="1" fill="#8c0000"/>
<rect x="1122" y="437" width="8" height="1" fill="#8c0000"/>
<rect x="978" y="600" width="152" height="50" fill="#000000"/>
</svg>
<div class="pl" style="top:59px">10.80</div>
<div class="pl" style="top:99px">10.60</div>
<div class="pl" style="top:140px">10.40</div>
<div class="pl" style="top:180px">10.20</div>
<div class="pl" style="top:221px">10.00</div>
<div class="pl" style="top:261px">9.80</div>
<div class="pl" style="top:302px">9.60</div>
<div class="pl" style="top:342px">9.40</div>
<div class="pl" style="top:383px">9.20</div>
<div class="pl" style="top:423px">9.00</div>
<div class="pl" style="top:464px">8.80</div>
<div class="pl" style="top:504px">8.60</div>
<div class="pl" style="top:545px">8.40</div>
<div class="pl" style="top:585px">8.20</div>
<div class="a" style="left:28.5px;top:1px;color:#e8e8e8">分时</div>
<div class="a" style="left:61px;top:1px;color:#e8e8e8">1分钟</div>
<div class="a" style="left:100px;top:1px;color:#e8e8e8">5分钟</div>
<div class="a" style="left:140px;top:1px;color:#e8e8e8">15分钟</div>
<div class="a" style="left:185px;top:1px;color:#e8e8e8">30分钟</div>
<div class="a" style="left:231.5px;top:1px;color:#e8e8e8">60分钟</div>
<div class="a" style="left:278px;top:1px;color:#00e0ff">日线</div>
<div class="a" style="left:312.5px;top:1px;color:#e8e8e8">周线</div>
<div class="a" style="left:346.5px;top:1px;color:#e8e8e8">月线</div>
<div class="a" style="left:378.5px;top:1px;color:#e8e8e8">多周期</div>
<div class="a" style="left:422.5px;top:1px;color:#e8e8e8">更多</div>
<div class="a" style="left:449px;top:1px;font-size:12px">&gt;</div>
<div class="a" style="left:811px;top:1px">复权</div>
<div class="a" style="left:845px;top:1px">叠加</div>
<div class="a" style="left:879px;top:1px">多股</div>
<div class="a" style="left:914px;top:1px">统计</div>
<div class="a" style="left:949px;top:1px">画线</div>
<div class="a" style="left:987.5px;top:1px">F10</div>
<div class="a" style="left:1019px;top:1px">标记</div>
<div class="a" style="left:1052.5px;top:1px">+自选</div>
<div class="a" style="left:1091px;top:1px">返回</div>
<div class="a" style="left:2px;top:21px">恒丰纸业(日线,前复权)</div>
<div class="a" style="left:145px;top:21px">MA5: 10.16</div>
<div class="a" style="left:209px;top:21px;color:#ffff00">MA10: 10.01</div>
<div class="a" style="left:281.5px;top:21px;color:#ff00ff">MA20: 9.85</div>
<div class="a" style="left:346.5px;top:21px;color:#00ff00">MA60: 9.70</div>
<div class="a" style="left:4px;top:631px;color:#c80000">2025年</div>
<div class="a" style="left:132px;top:631px;color:#c80000">10</div>
<div class="a" style="left:296.5px;top:631px;color:#c80000">11</div>
<div class="a" style="left:492px;top:631px;color:#c80000">12</div>
<div class="a" style="left:714px;top:631px;color:#c80000">1</div>
<div class="a" style="left:909px;top:631px;color:#c80000">2</div>
<div class="a" style="left:626px;top:631px;color:#ffffff">2025/12/19/五</div>
<div class="a" style="left:1072px;top:399px;color:#ffffff">9.08</div>
<div class="wm1">乐淘公式网</div><div class="wm2">www.60lt.com</div>
<div class="rpc" style="top:27.0px">资</div>
<div class="rpc" style="top:47.0px">买</div>
<div class="rpc" style="top:66.4px">卖</div>
<div class="rpc" style="top:85.8px">买</div>
<div class="rpc" style="top:105.2px">卖</div>
<div class="rpc" style="top:124.6px">买</div>
<div class="rpc" style="top:144.0px">买</div>
<div class="rpc" style="top:163.2px">卖</div>
<div class="rpc" style="top:182.4px">买</div>
<div class="rpc" style="top:201.6px">卖</div>
<div class="rpc" style="top:220.8px">买</div>
<div class="rpc" style="top:240.0px">开</div>
<div class="rpc" style="top:259.8px">资</div>
<div class="rpc" style="top:279.6px">资</div>
<div class="rpc" style="top:299.4px">总</div>
<div class="rpc" style="top:319.2px">外</div>
<div class="rpc" style="top:339.0px">控</div>
<div class="rpc" style="top:359.0px">得</div>
<div class="rpc" style="top:379.0px">收</div>
<div class="rpc" style="top:399px;color:#e0e000">自</div>
<div class="rpc" style="top:420px">买</div>
<div class="rpn" style="top:438.0px">1</div>
<div class="rpn" style="top:450.2px">1</div>
<div class="rpn" style="top:462.5px">1</div>
<div class="rpn" style="top:474.8px">1</div>
<div class="rpn" style="top:487.0px">1</div>
<div class="rpn" style="top:499.2px">1</div>
<div class="rpn" style="top:511.5px">1</div>
<div class="rpn" style="top:523.8px">1</div>
<div class="rpn" style="top:536.0px">1</div>
<div class="rpn" style="top:548.2px">1</div>
<div class="rpn" style="top:560.5px">1</div>
<div class="rpn" style="top:572.8px">1</div>
<div class="rpn" style="top:585.0px">1</div>
</body></html>
